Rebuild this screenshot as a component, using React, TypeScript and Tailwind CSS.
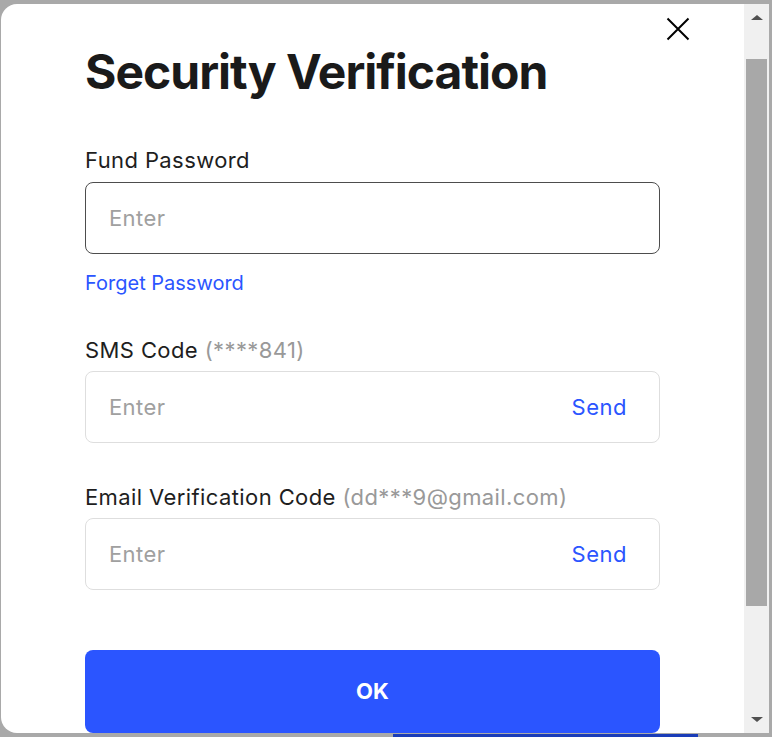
import { useState } from "react";

const font = "font-['Inter','Noto_Sans',sans-serif]";

const CodeField = ({ label, hint }: { label: string; hint: string }) => {
  const [value, setValue] = useState("");
  return (
    <div className="flex flex-col">
      <label className="text-[22px] leading-[28px] tracking-[0.4px] text-[#1e1e1e]">
        {label} <span className="text-[#999999]">{hint}</span>
      </label>
      <div className="mt-[7px] flex h-[72px] items-center rounded-[8px] border border-[#dedede] pl-[23px] pr-[32px]">
        <input
          value={value}
          onChange={(e) => setValue(e.target.value)}
          placeholder="Enter"
          className="flex-1 bg-transparent text-[22px] tracking-[0.4px] text-[#1e1e1e] outline-none placeholder:text-[#a0a0a0]"
        />
        <button className="text-[22px] tracking-[0.5px] text-[#2b55ff]">Send</button>
      </div>
    </div>
  );
};

export default function App() {
  return (
    <div
      className={`relative h-[737px] w-[772px] overflow-hidden bg-[#a9a9a9] pl-[1px] pt-[4px] ${font}`}
    >
      <div className="flex h-[729px] w-[768px] overflow-hidden rounded-l-[16px] bg-white">
        <div className="relative flex-1 pl-[84px] pr-[84px]">
          <button className="absolute left-[665px] top-[13px] size-[24px] text-black">
            <svg viewBox="0 0 24 24" className="size-[24px]" fill="none" stroke="currentColor" strokeWidth={2}>
              <path d="M1.5 1.5 L22.5 22.5 M22.5 1.5 L1.5 22.5" />
            </svg>
          </button>

          <h2 className="mt-[44px] text-[48px] font-bold leading-[48px] tracking-[-1px] text-[#1a1a1a]">
            Security Verification
          </h2>

          <div className="mt-[50px] flex flex-col">
            <label className="text-[22px] leading-[28px] tracking-[0.4px] text-[#1e1e1e]">Fund Password</label>
            <div className="mt-[8px] flex h-[72px] items-center rounded-[8px] border border-[#4d4d4d] px-[23px]">
              <input
                autoFocus
                type="password"
                placeholder="Enter"
                className="flex-1 bg-transparent text-[22px] tracking-[0.4px] text-[#1e1e1e] caret-black outline-none placeholder:text-[#a0a0a0]"
              />
            </div>
            <a className="mt-[16px] text-[20px] leading-[26px] text-[#2b55ff]">Forget Password</a>
          </div>

          <div className="mt-[40px]">
            <CodeField label="SMS Code" hint="(****841)" />
          </div>
          <div className="mt-[40px]">
            <CodeField label="Email Verification Code" hint="(dd***9@gmail.com)" />
          </div>

          <button className="mt-[60px] h-[83px] w-full rounded-[8px] bg-[#2b55ff] text-[22px] font-bold text-white">
            OK
          </button>
        </div>

        <div className="flex w-[25px] flex-col items-center bg-[#f0f0f0]">
          <div className="mt-[11px] h-0 w-0 border-x-[6px] border-b-[5px] border-x-transparent border-b-[#505050]" />
          <div className="mt-[39px] h-[547px] w-[21px] bg-[#a8a8a8]" />
          <div className="mt-auto mb-[11px] h-0 w-0 border-x-[6px] border-t-[5px] border-x-transparent border-t-[#505050]" />
        </div>
      </div>
      <div className="absolute bottom-0 left-[393px] h-[3px] w-[305px] bg-[#1a3cb8]" />
    </div>
  );
}
